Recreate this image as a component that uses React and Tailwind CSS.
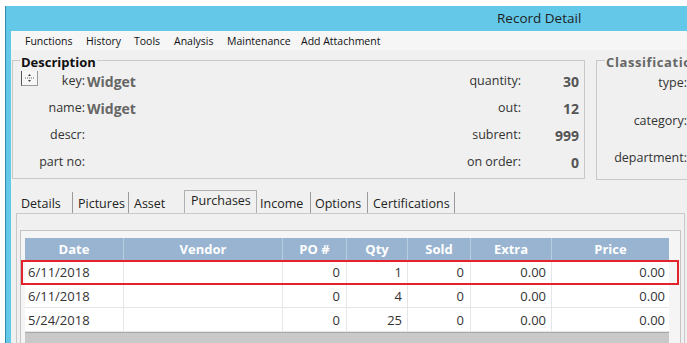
import React from "react";

const font = { fontFamily: '"Open Sans", "Noto Sans", sans-serif' };

function Spinner() {
  return (
    <svg width="17" height="16" viewBox="0 0 17 16" className="block">
      <rect x="0.5" y="0.5" width="16" height="15" fill="#f7f7f7" stroke="#9a9a9a" />
      <line x1="0.5" y1="0.5" x2="0.5" y2="15.5" stroke="#555" />
      <line x1="4" y1="8" x2="13" y2="8" stroke="#666" strokeDasharray="1 1" />
      <path d="M8.5 4 L7 6 L10 6 Z" fill="#444" />
      <path d="M8.5 12 L7 10 L10 10 Z" fill="#444" />
    </svg>
  );
}

const cols = [
  { name: "Date", w: "w-[99px]", align: "text-left pl-[3px]" },
  { name: "Vendor", w: "w-[159px]", align: "text-left" },
  { name: "PO #", w: "w-[64px]", align: "text-right pr-[6px]" },
  { name: "Qty", w: "w-[61px]", align: "text-right pr-[5px]" },
  { name: "Sold", w: "w-[63px]", align: "text-right pr-[6px]" },
  { name: "Extra", w: "w-[81px]", align: "text-right pr-[5px]" },
  { name: "Price", w: "w-[117px]", align: "text-right pr-[4px]" },
];

const rows = [
  ["6/11/2018", "", "0", "1", "0", "0.00", "0.00"],
  ["6/11/2018", "", "0", "4", "0", "0.00", "0.00"],
  ["5/24/2018", "", "0", "25", "0", "0.00", "0.00"],
];

function DescRow({ label, value, rlabel, rvalue, spinner }) {
  return (
    <div className="flex items-center h-[27px] shrink-0">
      <div className="w-[72px] flex items-center text-[12.5px] text-[#333]">
        {spinner ? (
          <div className="ml-[8px] -mt-[7px]">
            <Spinner />
          </div>
        ) : null}
        <span className="ml-auto">{label}</span>
      </div>
      <div className="pl-[2px] text-[14px] font-bold text-[#666]">{value}</div>
      <div className="flex-1" />
      <div className="text-right text-[12.5px] text-[#333]">{rlabel}</div>
      <div className="w-[58px] text-right text-[14px] font-bold text-[#555]">{rvalue}</div>
      <div className="w-[5px]" />
    </div>
  );
}

function ClassRow({ label, h }) {
  return (
    <div className={`flex items-center justify-end pr-[8px] text-[12.5px] text-[#333] whitespace-nowrap shrink-0 ${h}`}>
      {label}
    </div>
  );
}

export default function App() {
  return (
    <div className="w-[687px] h-[343px] bg-white overflow-hidden" style={font}>
      <div className="h-[6px]" />
      <div className="ml-[5px] w-[720px] h-[337px] overflow-hidden border-l border-[#3389aa] bg-[#64c8e8] flex flex-col">
        <div className="h-[25px] shrink-0 flex items-center pl-[491px] text-[13.5px] text-[#1e1e1e]">Record Detail</div>
        <div className="h-[312px] shrink-0 ml-[5px] bg-[#f0f0f0] flex flex-col overflow-hidden">
          <div className="h-[19px] shrink-0 bg-[#f6f6f6] flex items-center pl-[14px] pt-[2px] text-[10.5px] text-[#111]">
            <span className="w-[61px]">Functions</span>
            <span className="w-[48px]">History</span>
            <span className="w-[40px]">Tools</span>
            <span className="w-[53px]">Analysis</span>
            <span className="w-[74px]">Maintenance</span>
            <span>Add Attachment</span>
          </div>

          <div className="flex shrink-0 mt-[10px] ml-[1px]">
            <div className="relative w-[573px] h-[119px] border border-[#c9c9c9] pt-[7px]">
              <span className="absolute -top-[8px] left-[7px] px-[1px] bg-[#f0f0f0] text-[13px] font-bold text-[#111] leading-[18px]">
                Description
              </span>
              <DescRow label="key:" value="Widget" rlabel="quantity:" rvalue="30" spinner />
              <DescRow label="name:" value="Widget" rlabel="out:" rvalue="12" />
              <DescRow label="descr:" value="" rlabel="subrent:" rvalue="999" />
              <DescRow label="part no:" value="" rlabel="on order:" rvalue="0" />
            </div>
            <div className="relative ml-[11px] w-[100px] h-[120px] border border-[#c9c9c9] pt-[10px]">
              <span className="absolute -top-[8px] left-[8px] px-[1px] bg-[#f0f0f0] text-[13px] font-bold text-[#666] tracking-[0.6px] leading-[18px] whitespace-nowrap">
                Classification
              </span>
              <ClassRow label="type:" h="h-[24px]" />
              <ClassRow label="category:" h="h-[38px] pt-[14px]" />
              <ClassRow label="department:" h="h-[37px] pt-[14px]" />
            </div>
          </div>

          <div className="ml-[5px] mt-[9px] w-[669px] shrink-0 flex flex-col">
            <div className="h-[24px] shrink-0 flex items-end text-[12.5px] text-[#222]">
              <div className="ml-[1px] w-[56px] h-[21px] border-r border-[#9a9a9a] pl-[4px] leading-[21px] pt-[1px]">Details</div>
              <div className="w-[56px] h-[21px] border-r border-[#9a9a9a] pl-[5px] leading-[21px] pt-[1px]">Pictures</div>
              <div className="w-[55px] h-[21px] pl-[5px] leading-[21px] pt-[1px]">Asset</div>
              <div className="w-[73px] h-[23px] border-l border-r border-t border-[#b0b0b0] pl-[6px] leading-[20px] bg-[#f0f0f0]">Purchases</div>
              <div className="w-[54px] h-[21px] border-r border-[#9a9a9a] pl-[3px] leading-[21px] pt-[1px]">Income</div>
              <div className="w-[57px] h-[21px] border-r border-[#9a9a9a] pl-[4px] leading-[21px] pt-[1px]">Options</div>
              <div className="w-[87px] h-[21px] border-r border-[#9a9a9a] pl-[5px] leading-[21px] pt-[1px]">Certifications</div>
            </div>
            <div className="h-[130px] shrink-0 border-t border-l border-r border-[#c9c9c9] pl-[3px] pt-[16px]">
              <div className="relative w-[661px] h-[120px] border border-[#c4c4c4] bg-[#f5f5f5] pl-[4px] pt-[7px]">
                <div className="w-[644px] flex flex-col">
                  <div className="flex h-[22px] shrink-0 bg-[#99b4d1] text-white font-bold text-[13px]">
                    {cols.map((c, i) => (
                      <div
                        key={c.name}
                        className={`${c.w} flex items-center justify-center pt-[2px] ${i < cols.length - 1 ? "border-r border-[#b9cde2]" : ""}`}
                      >
                        {c.name}
                      </div>
                    ))}
                  </div>
                  {rows.map((r, ri) => (
                    <div key={ri} className="flex h-[24px] shrink-0 bg-white border-b border-[#e6e6e6] text-[13px] text-[#333]">
                      {r.map((v, ci) => (
                        <div
                          key={ci}
                          className={`${cols[ci].w} ${cols[ci].align} leading-[25px] ${ci < cols.length - 1 ? "border-r border-[#e6e6e6]" : ""}`}
                        >
                          {v}
                        </div>
                      ))}
                    </div>
                  ))}
                  <div className="h-[14px] shrink-0 bg-[#c9c9c9] border-t border-[#a8a8a8]" />
                </div>
                <div className="absolute top-[29px] left-0 w-[658px] h-[25px] border-2 border-[#e5212b]" />
              </div>
            </div>
          </div>
        </div>
      </div>
    </div>
  );
}
